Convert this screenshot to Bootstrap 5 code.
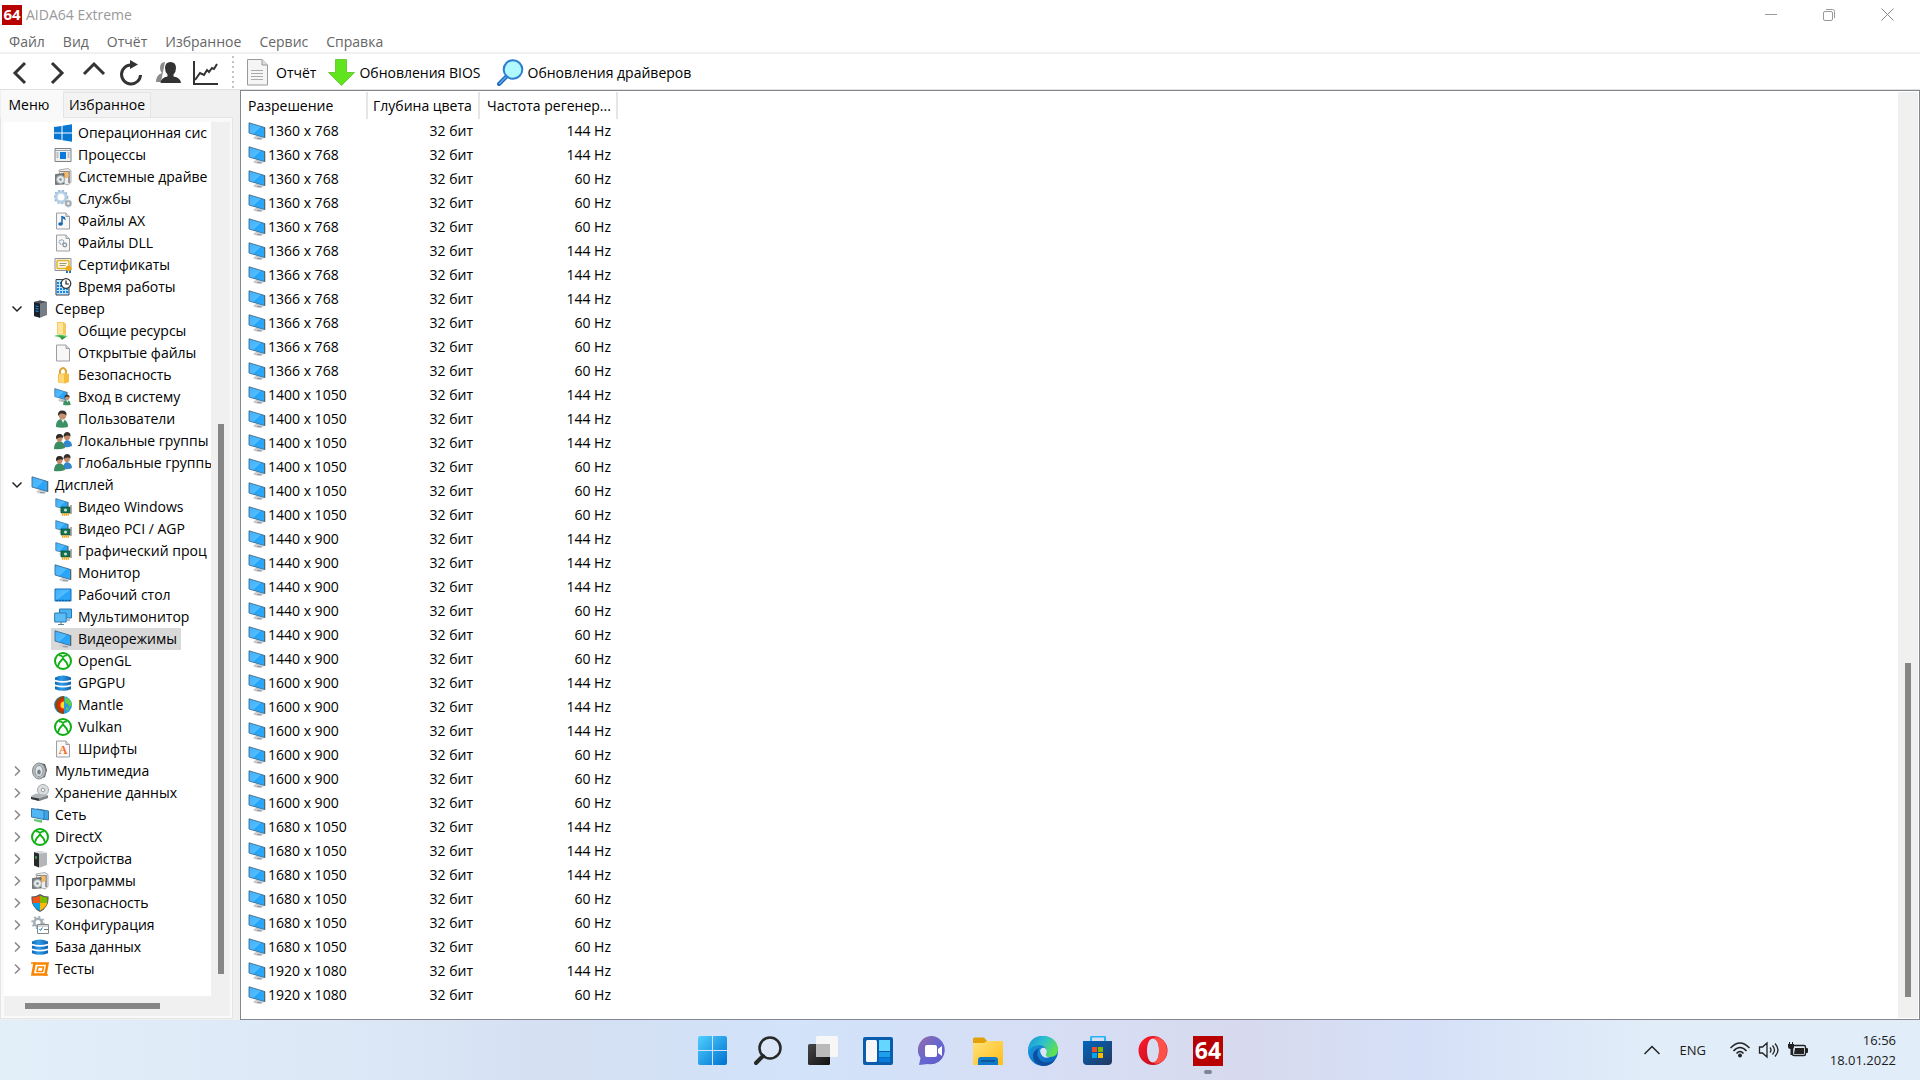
<!DOCTYPE html>
<html lang="ru">
<head>
<meta charset="utf-8">
<meta name="viewport" content="width=device-width, initial-scale=1">
<title>AIDA64 Extreme</title>
<link rel="stylesheet" href="https://cdn.jsdelivr.net/npm/bootstrap@5.3.0/dist/css/bootstrap.min.css">
<style>
body{font-family:"Open Sans","Noto Sans",sans-serif;font-size:14px;line-height:20px;color:#000;background:#fff}
button{background:none;border:0;padding:0;color:inherit}
a{color:inherit;text-decoration:none}
svg{display:block;flex:none}
.titlebar{height:29px;color:#999;padding-left:2px}
.titlebar button{width:58px;height:29px}
.menubar{height:25px;color:#666;border-bottom:2px solid #f0f0f0}
.menubar a{padding:0 9px;line-height:25px}
.toolbar{height:36px;padding:2px 0 0 1px;border-bottom:1px solid #e0e0e0}
.toolbar .nav-tool{width:37px;height:32px}
.tool-sep{width:2px;height:33px;background:repeating-linear-gradient(#c4c4c4 0 2px,#fff 2px 5px);margin:0 13px 0 9px}
.side{width:240px;background:#f0f0f0;flex:none}
.side-tabs{height:27px;padding-left:1px}
.side-tabs button{border:1px solid #e5e5e5;border-bottom:0}
.side-tabs .tab-on{width:62px;background:#f9f9f9;border-color:#f9f9f9;height:28px;z-index:1;line-height:26px;padding-right:6px}
.side-tabs .tab-off{width:88px;background:#f3f3f3;height:25px;align-self:flex-end}
.side-page{width:233px;border:1px solid #e5e5e5;background:#f9f9f9;padding:4px 2px 2px 3px;margin-bottom:1px}
.tree{width:207px;overflow:hidden;background:#fff}
.tree ul{margin:0;padding:0;list-style:none}
.tree-row{height:22px;white-space:nowrap}
.tree-row.lvl-top{padding-left:4px}
.tree-row.lvl-sub{padding-left:47px}
.tree-row a{height:22px;padding:0 4px 0 3px;gap:6px}
.tree-row.lvl-top a{padding-left:5px}
.tree-row.picked a{background:#d9d9d9}
.tree-row button{width:18px;height:22px}
.bar-v{width:19px;background:#f0f0f0;display:flex;flex-direction:column;align-items:center}
.bar-v i{width:6px;background:#868686}
.bar-h{height:20px;background:#f0f0f0;display:flex;align-items:center;padding-left:21px}
.bar-h i{width:135px;height:6px;background:#868686}
.pane{border:1px solid #828790;background:#fff}
.modes{border-collapse:collapse;table-layout:fixed;width:376px;margin-top:1px;flex:none;align-self:flex-start}
.modes th{height:27px;font-weight:400;padding:0 5px;border-right:2px solid #e5e5e5;white-space:nowrap}
.modes th:first-child,.modes td:first-child{padding-left:7px}
.modes th:last-child{padding-left:7px}
.modes td{height:24px;padding:0 6px 0 5px;text-align:right;white-space:nowrap}
.modes td span{display:flex;align-items:center;gap:2px}
.bar-list{width:21px;background:#f0f0f0;border:1px solid #fff;border-left:0}
.taskbar{height:60px;color:#1b1b1b;background:linear-gradient(90deg,#e2eef8 0,#dce8f6 18%,#d4dff2 30%,#d2e3fa 41%,#d6def5 54%,#d7daee 65%,#d5e0f8 74%,#e1edf8 86%,#e1edf8 100%)}
.taskbar .app{width:55px;height:60px;padding-top:1px;display:flex;align-items:center;justify-content:center}
.run-mark{left:24px;top:50px;width:8px;height:4px;border-radius:2px;background:#7e8592}
.side-edge{flex:1 1 0;padding:0 24px}
.tray{font-size:13px}
.clock{line-height:20px;text-align:right;width:88px}
</style>
<script src="https://cdn.jsdelivr.net/npm/bootstrap@5.3.0/dist/js/bootstrap.bundle.min.js"></script>
</head>
<body class="d-flex flex-column vh-100 overflow-hidden">

<svg width="0" height="0" class="position-absolute" aria-hidden="true">
<defs>
<linearGradient id="gScr" x1="0" y1="0" x2="1" y2="1"><stop offset="0" stop-color="#3fb0fa"/><stop offset=".5" stop-color="#52bbff"/><stop offset=".52" stop-color="#28a5f8"/><stop offset="1" stop-color="#2ba9fb"/></linearGradient>
<linearGradient id="gDb" x1="0" x2="1"><stop offset="0" stop-color="#0c66b5"/><stop offset=".4" stop-color="#2f9be8"/><stop offset="1" stop-color="#0d62ad"/></linearGradient>
<linearGradient id="gWin" x1="0" y1="0" x2="1" y2="1"><stop offset="0" stop-color="#4fd0ff"/><stop offset="1" stop-color="#0070cf"/></linearGradient>
<linearGradient id="gChat" x1="0" y1="0" x2="1" y2="1"><stop offset="0" stop-color="#9a6aa6"/><stop offset=".5" stop-color="#6668cf"/><stop offset="1" stop-color="#5d57c8"/></linearGradient>
<linearGradient id="gFold" x1="0" y1="0" x2="1" y2="1"><stop offset="0" stop-color="#ffe27a"/><stop offset="1" stop-color="#ffbd17"/></linearGradient>
<linearGradient id="gStore" x1="0" y1="0" x2="1" y2="1"><stop offset="0" stop-color="#0067c0"/><stop offset="1" stop-color="#25375e"/></linearGradient>
<linearGradient id="gOpera" x1="0" y1="0" x2="1" y2="1"><stop offset="0" stop-color="#ff1b2d"/><stop offset="1" stop-color="#b8081b"/></linearGradient>
<linearGradient id="gEdgeTop" x1="0" y1="0" x2="1" y2=".5"><stop offset="0" stop-color="#1591d8"/><stop offset=".5" stop-color="#2cc0d0"/><stop offset="1" stop-color="#5ee052"/></linearGradient>
<linearGradient id="gEdge" x1="0" y1="0" x2="1" y2="1"><stop offset="0" stop-color="#1ba3e8"/><stop offset="1" stop-color="#0b5cb5"/></linearGradient>
<linearGradient id="gDark" x1="0" y1="0" x2="1" y2="1"><stop offset="0" stop-color="#474747"/><stop offset="1" stop-color="#101010"/></linearGradient>

<symbol id="monitor" viewBox="0 0 18 18"><path d="M5 15.500l4-2 7 2.500-4 1.800-5-.6z" fill="#c9cdd1"/><path d="M9 16.500l5 .5" stroke="#8d9399"/><path d="M1 .8l15.500 4.700v10L1 11z" fill="url(#gScr)" stroke="#3c6d91" stroke-width=".9"/><path d="M16.700 5.300v10.400" stroke="#5e6468" stroke-width="1.200"/></symbol>
<symbol id="win" viewBox="0 0 18 18"><path d="M0 3l7.500-1v6.500H0zM8.500 1.800L18 .3v8.200H8.500zM0 9.500h7.500V16L0 15zM8.500 9.500H18v8.200l-9.500-1.400z" fill="#0877d2"/></symbol>
<symbol id="proc" viewBox="0 0 18 18"><path d="M1 2.500h16v13H1z" fill="#eef0f1" stroke="#7c8287"/><path d="M1 4.500h16" stroke="#9ea3a7"/><path d="M6 6h6v7H6z" fill="#0b79db"/><path d="M2.500 7h2m-2 2h2m-2 2h2m9-4h2m-2 2h2m-2 2h2" stroke="#8f9599"/></symbol>
<symbol id="driver" viewBox="0 0 18 18"><path d="M5 2l9-1.500 3 2v12l-3 2.500-7-2z" fill="#eee" stroke="#999" stroke-width=".8"/><path d="M6 3.500h10" stroke="#888"/><path d="M15 3v12" stroke="#999" stroke-width="2"/><circle cx="11.500" cy="7" r="3.200" fill="#f6b868"/><path d="M1.500 6.500l8.500-1V16l-8.500.5z" fill="#777c80" stroke="#55595c" stroke-width=".7"/><circle cx="6.500" cy="11.500" r="4" fill="#e8ebed" stroke="#9aa"/><circle cx="6.500" cy="11.500" r="1.300" fill="#84898c"/></symbol>
<symbol id="gears" viewBox="0 0 18 18"><circle cx="7" cy="7" r="5" fill="none" stroke="#b5cfe5" stroke-width="3"/><circle cx="7" cy="7" r="6.600" fill="none" stroke="#9eb9d0" stroke-width="1.500" stroke-dasharray="2 2"/><circle cx="14.300" cy="13.500" r="2.300" fill="#eee" stroke="#9da8b1" stroke-width="1.800"/><circle cx="14.300" cy="13.500" r="3.500" fill="none" stroke="#aab4bb" stroke-dasharray="1 1"/></symbol>
<symbol id="page" viewBox="0 0 18 18"><path d="M2.500 1h9.500l3.500 3.500V17h-13z" fill="#f7f7f7" stroke="#9b9fa2"/><path d="M12 1v3.500h3.500" fill="#ddd" stroke="#9b9fa2"/></symbol>
<symbol id="ax" viewBox="0 0 18 18"><use href="#page"/><path d="M8 4v8" stroke="#1868ae" stroke-width="1.500"/><path d="M8 4q0 3 4 4-1-1-1-3z" fill="#1868ae"/><ellipse cx="6.500" cy="12" rx="2.300" ry="1.700" fill="#1868ae"/></symbol>
<symbol id="dll" viewBox="0 0 18 18"><use href="#page"/><circle cx="7.500" cy="8" r="2.200" fill="none" stroke="#8ca4b6" stroke-width="1.400" stroke-dasharray="1.200 .6"/><circle cx="10.800" cy="11" r="1.800" fill="#f7f7f7" stroke="#8d9499" stroke-width="1.300"/></symbol>
<symbol id="cert" viewBox="0 0 18 18"><path d="M1 2.500h16v12H1z" fill="#f4f4f4" stroke="#8e9296"/><rect x="3" y="4.500" width="12" height="8" rx="1" fill="#fff8d8" stroke="#e2b32c" stroke-width="1.500"/><path d="M5.500 7.500h7m-7 2h6" stroke="#998"/><path d="M13 13v4m3-4v4" stroke="#1674c4" stroke-width="2"/><circle cx="14.500" cy="12.500" r="2.800" fill="#f2a80d"/></symbol>
<symbol id="uptime" viewBox="0 0 18 18"><path d="M2 1.500h13v15.500H2z" fill="#bfe4ff" stroke="#39454f"/><path d="M3 5h11M3 8h11M3 11h11M3 14h11" stroke="#1787e0" stroke-width="2" stroke-dasharray="2 1"/><circle cx="12" cy="5.500" r="4.800" fill="#fff" stroke="#333" stroke-width="1.200"/><path d="M12 2.500v3.500h3" stroke="#222" fill="none" stroke-width="1.200"/></symbol>
<symbol id="server" viewBox="0 0 18 18"><path d="M3 2l6-1.500 7 1.500v13l-7 2.700L3 16z" fill="#777d85"/><path d="M3 2l6 1.500v14.200L3 16z" fill="#1b2129"/><path d="M3 2l6-1.500 7 1.500-7 1.500z" fill="#4b5159"/><path d="M4.500 6l3 .5m-3 2l3 .5m-3 2l3 .5" stroke="#1491f3" stroke-width="1.200"/></symbol>
<symbol id="share" viewBox="0 0 18 18"><path d="M3 0h7l2 2v11l-9-1z" fill="#f4ca5f"/><path d="M4 1h5v12l-5-1z" fill="#ffe699"/><path d="M0 14l5-1.500 9 1.500-5 2z" fill="#5abf60"/><path d="M5 14l3 4 4-3z" fill="#319c42"/></symbol>
<symbol id="lock" viewBox="0 0 18 18"><path d="M6 8V4.500q3-5 6 0V8" fill="none" stroke="#dba238" stroke-width="2"/><path d="M4 8l8-1 3 1v8l-4 1.500-7-1z" fill="#f6bd40"/><path d="M5 8l5 .5V17l-5-.8z" fill="#ffd978"/></symbol>
<symbol id="user" viewBox="0 0 18 18"><path d="M2 17q-.5-7 5-8 7 0 7 8-6 1.500-12 0z" fill="#3d9164"/><path d="M7 9l2 4 2-4z" fill="#e9f0ee"/><ellipse cx="8.500" cy="5.500" rx="3.600" ry="4" fill="#c89170"/><path d="M4 6Q3.500.5 8 .5q5 0 4.500 5-2-2.500-6-2z" fill="#35302c"/></symbol>
<symbol id="group" viewBox="0 0 18 18"><path d="M9 15q0-6 4-7 5 1 5 6-4 2-9 1z" fill="#3287cd"/><ellipse cx="13" cy="4.500" rx="3" ry="3.700" fill="#c58b69"/><path d="M9.500 5q0-5 4-5 3.500.5 3 4.500-2-2-7 .5z" fill="#38312b"/><path d="M0 17q0-7 5-8 6 1 6 7-5 2-11 1z" fill="#3c8c62"/><ellipse cx="5.500" cy="6" rx="3" ry="3.700" fill="#c58b69"/><path d="M2 7q-.5-5 3.500-5T9 6Q7 4 2 7z" fill="#302b27"/></symbol>
<symbol id="logon" viewBox="0 0 18 18"><use href="#monitor" width="14" height="14"/><use href="#user" x="8" y="6" width="11" height="12"/></symbol>
<symbol id="gpu" viewBox="0 0 18 18"><use href="#monitor" x="1" width="14" height="14"/><path d="M7 9h9v6H7z" fill="#15724d" stroke="#0d4b37" stroke-width=".7"/><path d="M17 7v9" stroke="#777" stroke-width="1.200"/><path d="M8 16.500h7" stroke="#f3a516" stroke-width="2.500" stroke-dasharray="1.500 .5"/><circle cx="11.500" cy="12" r="1.500" fill="#cde3da"/></symbol>
<symbol id="desk" viewBox="0 0 18 18"><path d="M1 3h16v12H1z" fill="url(#gScr)" stroke="#1271be"/><path d="M2 14.300h14" stroke="#075aa1" stroke-dasharray="2 1"/></symbol>
<symbol id="multi" viewBox="0 0 18 18"><path d="M5.500 1h12v9h-12z" fill="#48b2f3" stroke="#2c79ad"/><path d="M.7 5h11.500v9H.7z" fill="#5cbdf6" stroke="#2c79ad"/><path d="M4 16.500h6M7 14v2m6-4h3" stroke="#5a7d94"/></symbol>
<symbol id="xbox" viewBox="0 0 18 18"><circle cx="9" cy="9" r="8" fill="#fff" stroke="#0fae13" stroke-width="2"/><path d="M5 3.500Q7 3.200 9 5q2-1.800 4-1.500M3.800 14.500Q5 10 9 6.500q4 3.500 5.200 8" fill="none" stroke="#0fae13" stroke-width="1.800"/></symbol>
<symbol id="db" viewBox="0 0 18 18"><path d="M1 3.500Q9-.5 17 3.500v2.200q-8 2.600-16 0zM1 7.500q8 2.600 16 0v3q-8 2.600-16 0zM1 12.200q8 2.600 16 0v3q-8 3-16 0z" fill="url(#gDb)"/></symbol>
<symbol id="mantle" viewBox="0 0 18 18"><circle cx="9" cy="9" r="9" fill="#2a9be3"/><path d="M10 0A9 9 0 0 0 10 18z" fill="#954606"/><path d="M10 3a6 6 0 0 0 0 12z" fill="#e9290e"/><path d="M10 5.500a3.500 3.500 0 0 0 0 7z" fill="#ffdb22"/><path d="M11 1l5 3 2 5-3 2-1-3-3-1zm1 10l3 1-2 4z" fill="#5fd13e"/></symbol>
<symbol id="font" viewBox="0 0 18 18"><use href="#page"/><text x="9" y="14" text-anchor="middle" font-family="Liberation Serif,serif" font-size="12" font-weight="bold" fill="#f26c1d">A</text></symbol>
<symbol id="speaker" viewBox="0 0 18 18"><path d="M9 1l5 1 2 6-2 7-5 2z" fill="#575b5e"/><ellipse cx="8" cy="9" rx="6.500" ry="8" fill="#b7bcc0" stroke="#84898c"/><ellipse cx="8" cy="9" rx="4" ry="5.500" fill="#dfe5e9" stroke="#8f979d"/><ellipse cx="8" cy="10" rx="1.800" ry="2.500" fill="#777f85"/></symbol>
<symbol id="drive" viewBox="0 0 18 18"><circle cx="12" cy="6" r="5.500" fill="#dcdfe1" stroke="#a7abae"/><circle cx="12" cy="6" r="1.800" fill="#f8f8f8" stroke="#999"/><path d="M0 12l5-2.500 12 1.500v3l-9 3-8-2z" fill="#b4b7b9"/><path d="M0 13l8 1.500V17l-8-2z" fill="#34383b"/><path d="M8 14.500l9-3V14l-9 3z" fill="#818588"/></symbol>
<symbol id="net" viewBox="0 0 18 18"><path d="M6 3l11.500 2v9L12 13z" fill="#39a6ec" stroke="#3a77a4"/><path d="M.5 2.500L13 4.500v9L.5 11z" fill="#50b6f5" stroke="#3a77a4"/><path d="M3 13l8 1v3l-8-2z" fill="#68ca76"/></symbol>
<symbol id="device" viewBox="0 0 18 18"><path d="M3 2l7-1 6 2v12l-7 2.500-6-2z" fill="#b4b7ba"/><path d="M3 2l5 1.500v14L3 15.500z" fill="#27292b"/><path d="M3 2l7-1 6 2-8 .5z" fill="#dadcdd"/><path d="M5 6v3" stroke="#43ce54" stroke-width="1.300"/></symbol>
<symbol id="shield" viewBox="0 0 18 18"><path d="M9 0q4 2.500 8.500 2.500Q18.500 13 9 18-.5 13 .5 2.500 5 2.500 9 0z" fill="#575c5e"/><path d="M9 1.500V9H1.800L1.500 3.500Q5.500 3.500 9 1.500z" fill="#f0531c"/><path d="M9 1.500V9h7.200l.3-5.500Q12.500 3.500 9 1.500z" fill="#7dba00"/><path d="M1.800 9H9v7.800Q2.800 13.500 1.800 9z" fill="#05a4ef"/><path d="M16.200 9H9v7.800q6.200-3.300 7.200-7.800z" fill="#ffb902"/></symbol>
<symbol id="config" viewBox="0 0 18 18"><circle cx="7" cy="6.500" r="3.800" fill="none" stroke="#a3afb7" stroke-width="2.600"/><circle cx="7" cy="6.500" r="5.800" fill="none" stroke="#a3afb7" stroke-width="1.800" stroke-dasharray="2 2.500"/><path d="M6.500 8.500h11v9h-11z" fill="#fff" stroke="#81888c"/><path d="M7 10h11" stroke="#aaa"/><path d="M8.500 13l1 1.500 2-3" fill="none" stroke="#147cd1"/><path d="M13 13.500h4" stroke="#777"/></symbol>
<symbol id="tests" viewBox="0 0 18 18"><path d="M3.500 3.500h13l-2 11H1.500z" fill="none" stroke="#fb8500" stroke-width="2.600"/><path d="M7 7h5.500l-1 4.500H6z" fill="none" stroke="#fb8500" stroke-width="1.500"/><path d="M0 3h5m8 12h4" stroke="#fb8500" stroke-width="1.500"/></symbol>
</defs>
</svg>

<header>
<div class="titlebar d-flex align-items-center">
<svg width="20" height="20" viewBox="0 0 20 20"><path fill="#b80202" d="M0 0h20v20H0z"/><text x="10" y="15" text-anchor="middle" font-size="15" font-weight="bold" fill="#fff">64</text></svg>
<span class="ms-1">AIDA64 Extreme</span>
<div class="ms-auto d-flex pe-1">
<button aria-label="Свернуть"><svg class="m-auto" width="12" height="12"><path d="M0 5.500h12" stroke="#999"/></svg></button>
<button aria-label="Восстановить"><svg class="m-auto" width="14" height="14" fill="none" stroke="#999"><rect x="1.500" y="3.500" width="9" height="9" rx="1.500"/><path d="M4 1.500h6.500q2 0 2 2V10"/></svg></button>
<button aria-label="Закрыть"><svg class="m-auto" width="13" height="13" stroke="#888"><path d="M.5.5l12 12m0-12l-12 12"/></svg></button>
</div>
</div>
<nav class="menubar d-flex"><a href="#">Файл</a><a href="#">Вид</a><a href="#">Отчёт</a><a href="#">Избранное</a><a href="#">Сервис</a><a href="#">Справка</a></nav>
<div class="toolbar d-flex align-items-center">
<button class="nav-tool" aria-label="Назад"><svg class="m-auto" width="26" height="26" fill="none" stroke="#333" stroke-width="3"><path d="M18 3L8 13l10 10"/></svg></button>
<button class="nav-tool" aria-label="Вперёд"><svg class="m-auto" width="26" height="26" fill="none" stroke="#333" stroke-width="3"><path d="M8 3l10 10L8 23"/></svg></button>
<button class="nav-tool" aria-label="Вверх"><svg class="m-auto" width="26" height="26" fill="none" stroke="#333" stroke-width="3"><path d="M3 14L13 4l10 10"/></svg></button>
<button class="nav-tool" aria-label="Обновить"><svg class="m-auto" width="26" height="26" fill="none" stroke="#333" stroke-width="3"><path d="M13 5a9.500 9.500 0 1 0 9.500 10"/><path d="M12 0l8 4.500L12 9z" fill="#333" stroke="none"/></svg></button>
<button class="nav-tool" aria-label="Пользователи"><svg class="m-auto" width="26" height="26" viewBox="0 0 26 26"><path d="M10 2q-5 0-5 6 0 3 2 5-6 2-6 9h5z" fill="#8b8b8b"/><path d="M15.500 2q5.500 0 5.500 6 0 4-2.500 6.500v2q7 1 7.500 6.500H5.500q.5-5.500 7-6.500v-2Q10 12 10 8q0-6 5.500-6z" fill="#333"/></svg></button>
<button class="nav-tool" aria-label="График"><svg class="m-auto" width="26" height="26" fill="none" stroke="#333" stroke-width="2"><path d="M2 1v23h24"/><path d="M3 20l5-7 4 2 3-5 2 2 3-4 2 1 3-5"/></svg></button>
<span class="tool-sep"></span>
<button class="d-flex align-items-center"><svg width="21" height="27" fill="#f5f5f5" stroke="#999"><path d="M.5.5H15L20.500 6v20H.5z"/><path d="M15 .5V6h5.500" fill="#ddd"/><path d="M4 11.500h12M4 14.500h12M4 17.500h12M4 20.500h12" stroke="#aaa"/></svg><span class="ps-2">Отчёт</span></button>
<button class="d-flex align-items-center ms-2 ps-1"><svg width="27" height="27"><path d="M7.500.5h11v13h8l-13 13-13-13h7z" fill="#5fe41d" stroke="#6ccb38"/></svg><span class="ps-1">Обновления BIOS</span></button>
<button class="d-flex align-items-center ms-3"><svg width="27" height="27" viewBox="0 0 27 27"><path d="M10 17l-8 8" stroke="#1b69bb" stroke-width="4" stroke-linecap="round"/><path d="M10 17l-8 8" stroke="#63a9ec" stroke-width="1.500"/><circle cx="16" cy="10.500" r="9.300" fill="#b0f9ff" stroke="#2d7ed3" stroke-width="2"/></svg><span class="ps-1">Обновления драйверов</span></button>
</div>
</header>

<main class="d-flex flex-grow-1">
<aside class="side d-flex flex-column">
<div class="side-tabs d-flex"><button class="tab-on">Меню</button><button class="tab-off">Избранное</button></div>
<div class="side-page d-flex flex-column flex-grow-1">
<div class="d-flex flex-grow-1">
<div class="tree"><ul id="tree"></ul></div>
<div class="bar-v"><i></i></div>
</div>
<div class="bar-h"><i></i></div>
</div>
</aside>
<section class="pane d-flex flex-grow-1">
<table class="modes">
<colgroup><col style="width:126px"><col style="width:112px"><col style="width:138px"></colgroup>
<thead><tr><th scope="col">Разрешение</th><th scope="col">Глубина цвета</th><th scope="col">Частота регенер...</th></tr></thead>
<tbody id="modes"></tbody>
</table>
<div class="bar-v bar-list ms-auto"><i></i></div>
</section>
</main>

<footer class="taskbar d-flex">
<div class="side-edge"></div>
<nav class="d-flex">
<button class="app" aria-label="Пуск"><svg width="30" height="30" fill="url(#gWin)"><path d="M0 2q0-2 2-2h12v14H0zM15 0h12q2 0 2 2v12H15zM0 15h14v14H2q-2 0-2-2zM15 15h14v12q0 2-2 2H15z"/></svg></button>
<button class="app" aria-label="Поиск"><svg width="28" height="30" fill="none" stroke="#282828"><circle cx="16" cy="12" r="10.500" fill="#dbe6f8" stroke-width="2.500"/><path d="M9 20l-7 7" stroke-width="4" stroke-linecap="round"/></svg></button>
<button class="app" aria-label="Представление задач"><svg width="30" height="30"><rect y="8" width="22" height="21" rx="1.500" fill="url(#gDark)"/><rect x="8" width="22" height="21" rx="1.500" fill="#f7f7f7"/><path d="M8 8h14v13H9.500Q8 21 8 19.500z" fill="#bababa"/></svg></button>
<button class="app" aria-label="Виджеты"><svg width="30" height="28"><rect width="30" height="28" rx="2" fill="#095dac"/><rect x="3" y="3" width="11" height="22" rx="1.500" fill="#f7f7f7"/><path d="M16 3h11v11H16z" fill="#65d6ff"/><path d="M16 15h11v5H16z" fill="#1ba0ec"/><path d="M16 20.500h11V25H16z" fill="#087dde"/></svg></button>
<button class="app" aria-label="Чат"><svg width="30" height="30"><path d="M15 0a14 14 0 1 1-5 28l-9 1 1.500-7A14 14 0 0 1 15 0z" fill="url(#gChat)"/><rect x="7" y="9" width="12" height="12" rx="2" fill="#fff"/><path d="M20 13l4-3v10l-4-3z" fill="#fff"/></svg></button>
<button class="app" aria-label="Проводник"><svg width="30" height="28"><path d="M0 2q0-1.500 1.500-1.500H11l3 3.500H29v7H0z" fill="#e3a108"/><path d="M0 6h11l3-2h15q1 0 1 1v23H0z" fill="url(#gFold)"/><path d="M5 28v-5q0-3 3-3h14q3 0 3 3v5z" fill="#0e78c8"/><path d="M8 24h14" stroke="#0d4c8b" stroke-width="1.500"/></svg></button>
<button class="app" aria-label="Edge"><svg width="30" height="30"><circle cx="15" cy="15" r="15" fill="url(#gEdge)"/><path d="M0 13Q2 0 15 0q14 1 15 13 0 8-8 8-5 0-4-3 2-8-6-9Q4 9 0 15z" fill="url(#gEdgeTop)"/><path d="M11 12q-4 7 1 12 6 5 15 0-4 6-12 6Q5 28 5 20q0-5 6-8z" fill="#0c4fa0"/><path d="M12 15q1-4 5-3 3 3 1 6-1 3 4 3-8 3-10-6z" fill="#d9e4f7"/></svg></button>
<button class="app" aria-label="Магазин"><svg width="30" height="30"><path d="M8 6V2q0-1.500 1.500-1.500h11Q22 .5 22 2v4" fill="none" stroke="#24b5f5" stroke-width="2"/><path d="M0 5h29v20q0 4-4 4H4q-4 0-4-4z" fill="url(#gStore)"/><path d="M9 11h5v5H9z" fill="#f25022"/><path d="M15 11h5v5h-5z" fill="#7fba00"/><path d="M9 17h5v5H9z" fill="#00a4ef"/><path d="M15 17h5v5h-5z" fill="#ffb900"/></svg></button>
<button class="app" aria-label="Opera"><svg width="30" height="30"><path fill-rule="evenodd" fill="url(#gOpera)" d="M15 0a14.500 14.500 0 1 1 0 29 14.500 14.500 0 0 1 0-29zm0 2.500c-4 0-6 5.500-6 12s2 12 6 12 6-5.500 6-12-2-12-6-12z"/><path d="M15 2.500q4-3 9 1 5 4 5 11t-5 11q-5 4-9 1 6-1 6-12t-6-12z" fill="#ff5147"/></svg></button>
<button class="app position-relative" aria-label="AIDA64"><svg width="30" height="30"><path fill="#b80202" d="M0 0h30v30H0z"/><text x="15" y="23" text-anchor="middle" font-size="23" font-weight="bold" fill="#fff">64</text></svg><span class="run-mark position-absolute"></span></button>
</nav>
<div class="tray side-edge d-flex align-items-center justify-content-end">
<button aria-label="Скрытые значки"><svg width="16" height="10" fill="none" stroke="#222" stroke-width="1.500"><path d="M.5 9L8 1.500 15.500 9"/></svg></button>
<button class="ms-3 ps-1 me-3">ENG</button>
<svg class="ms-2" width="20" height="18" viewBox="0 0 20 18" fill="none" stroke="#222" stroke-width="1.500"><path d="M.5 7Q10-3 19.500 7M3.500 10q6.500-7 13 0M6.500 12.500q3.500-4 7 0"/><circle cx="10" cy="14.500" r="1.200" fill="#222"/></svg>
<svg class="mx-2" width="22" height="18" viewBox="0 0 22 18" fill="none" stroke="#222" stroke-width="1.300"><path d="M1.500 6h3L9 2v14l-4.500-4h-3zM12 6.500q2 2.500 0 5M14.500 4.500q4 4.500 0 9M17 2.500q6 6.500 0 13"/></svg>
<svg width="20" height="18" viewBox="0 0 20 18"><rect x="4.500" y="4.500" width="13" height="10" rx="1.500" fill="none" stroke="#222" stroke-width="1.400"/><path d="M7 7h9v6H6zM18 7h1q1 0 1 1v3q0 1-1 1h-1zM0 3h6v3q0 2-2 2v6H2.500V8Q0 8 0 6zM1 1h1v2H1zm3 0h1v2H4z" fill="#222"/></svg>
<div class="clock"><div>16:56</div><div>18.01.2022</div></div>
</div>
</footer>

<script>
// Tree entries: [level, icon, caption, state]
const tree = [
[1,'win','Операционная сис'],[1,'proc','Процессы'],[1,'driver','Системные драйве'],[1,'gears','Службы'],[1,'ax','Файлы AX'],[1,'dll','Файлы DLL'],[1,'cert','Сертификаты'],[1,'uptime','Время работы'],
[0,'server','Сервер','open'],
[1,'share','Общие ресурсы'],[1,'page','Открытые файлы'],[1,'lock','Безопасность'],[1,'logon','Вход в систему'],[1,'user','Пользователи'],[1,'group','Локальные группы'],[1,'group','Глобальные группы'],
[0,'monitor','Дисплей','open'],
[1,'gpu','Видео Windows'],[1,'gpu','Видео PCI / AGP'],[1,'gpu','Графический проц'],[1,'monitor','Монитор'],[1,'desk','Рабочий стол'],[1,'multi','Мультимонитор'],[1,'monitor','Видеорежимы','picked'],[1,'xbox','OpenGL'],[1,'db','GPGPU'],[1,'mantle','Mantle'],[1,'xbox','Vulkan'],[1,'font','Шрифты'],
[0,'speaker','Мультимедиа'],[0,'drive','Хранение данных'],[0,'net','Сеть'],[0,'xbox','DirectX'],[0,'device','Устройства'],[0,'driver','Программы'],[0,'shield','Безопасность'],[0,'config','Конфигурация'],[0,'db','База данных'],[0,'tests','Тесты']];
const icon = n => `<svg width="18" height="18"><use href="#${n}"/></svg>`;
document.getElementById('tree').innerHTML = tree.map(([lvl, ic, cap, st]) => {
  const open = st === 'open';
  const arrow = lvl ? '' : `<button aria-label="${open ? 'Свернуть' : 'Развернуть'}"><svg class="mx-auto" width="12" height="12" fill="none" stroke="${open ? '#222' : '#888'}" stroke-width="1.500"><path d="${open ? 'M1.500 3.500L6 8l4.500-4.500' : 'M4 1.500L8.500 6 4 10.500'}"/></svg></button>`;
  return `<li class="tree-row d-flex align-items-center ${lvl ? 'lvl-sub' : 'lvl-top'} ${st === 'picked' ? 'picked' : ''}">${arrow}<a href="#" class="d-flex align-items-center">${icon(ic)}${cap}</a></li>`;
}).join('');

// Video modes: resolution followed by its refresh rates
const modes = [['1360 x 768',[144,144,60,60,60]],['1366 x 768',[144,144,144,60,60,60]],['1400 x 1050',[144,144,144,60,60,60]],['1440 x 900',[144,144,144,60,60,60]],['1600 x 900',[144,144,144,60,60,60]],['1680 x 1050',[144,144,144,60,60,60]],['1920 x 1080',[144,60]]];
document.getElementById('modes').innerHTML = modes.flatMap(([r, hz]) => hz.map(f => `<tr><td><span>${icon('monitor')}${r}</span></td><td>32 бит</td><td>${f} Hz</td></tr>`)).join('');

// Scroll thumbs: offset and length as a share of the track
[...document.querySelectorAll('.bar-v i')].forEach((t, i) => {
  const [top, len] = [[34.500, 63], [61.700, 36]][i];
  t.style.height = len + '%';
  t.style.marginTop = t.parentElement.clientHeight * top / 100 + 'px';
});
</script>
</body>
</html>
